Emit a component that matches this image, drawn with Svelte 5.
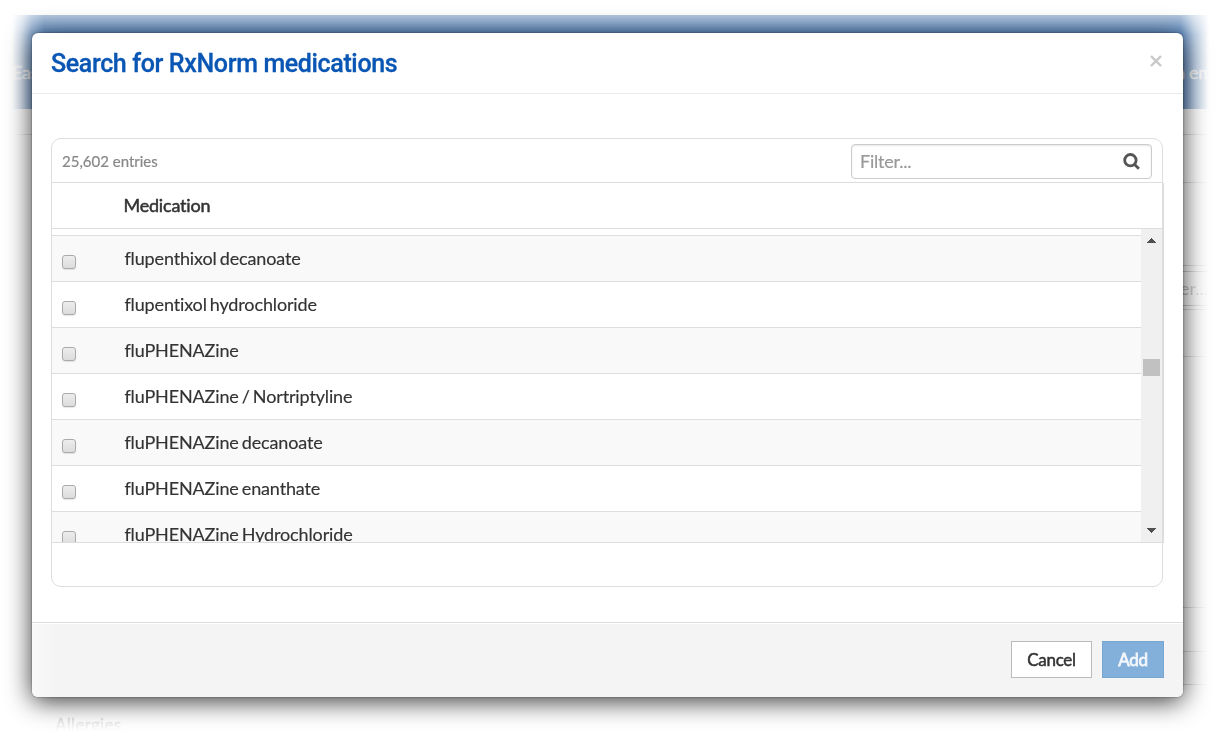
<script>
  let filter = $state('')

  let medications = $state([
    { name: 'flupenthixol decanoate', checked: false },
    { name: 'flupentixol hydrochloride', checked: false },
    { name: 'fluPHENAZine', checked: false },
    { name: 'fluPHENAZine / Nortriptyline', checked: false },
    { name: 'fluPHENAZine decanoate', checked: false },
    { name: 'fluPHENAZine enanthate', checked: false },
    { name: 'fluPHENAZine Hydrochloride', checked: false }
  ])

  const visible = $derived(
    medications.filter(m => m.name.toLowerCase().includes(filter.toLowerCase()))
  )
</script>

<div class="screen">
  <div class="backdrop">
    <div class="site-header">
      <span>Eas</span>
      <span>h em</span>
    </div>
    <div class="page">
      <div class="line full h26"></div>
      <div class="line h48"></div>
      <div class="line h83"></div>
      <div class="field">er...</div>
      <div class="line h4"></div>
      <div class="line h47"></div>
      <div class="line h251"></div>
      <div class="line h44"></div>
      <div class="line h33"></div>
      <div class="section-title">Allergies</div>
    </div>
  </div>

  <div class="modal">
    <header class="modal-header">
      <h3>Search for RxNorm medications</h3>
      <button type="button" class="close" aria-label="Close">
        <svg viewBox="0 0 12 12" width="12" height="12">
          <path d="M1 1L11 11M11 1L1 11" />
        </svg>
      </button>
    </header>

    <div class="modal-body">
      <div class="panel">
        <div class="toolbar">
          <span class="count">25,602 entries</span>
          <label class="filter">
            <input type="text" placeholder="Filter..." bind:value={filter} />
            <svg viewBox="0 0 18 18" width="18" height="18">
              <circle cx="7.4" cy="7.2" r="5.7" />
              <path d="M11.4 11.2L15.9 15.7" />
            </svg>
          </label>
        </div>

        <div class="table">
          <div class="table-head">Medication</div>
          <div class="table-body">
            <div class="rows">
              {#each visible as med (med.name)}
                <label class="row">
                  <input type="checkbox" bind:checked={med.checked} />
                  <span>{med.name}</span>
                </label>
              {/each}
            </div>
            <div class="scrollbar">
              <svg viewBox="0 0 10 5" width="10" height="5" shape-rendering="crispEdges">
                <path d="M0 5L5 0L10 5Z" />
              </svg>
              <div class="thumb"></div>
              <svg class="down" viewBox="0 0 10 5" width="10" height="5" shape-rendering="crispEdges">
                <path d="M0 0L5 5L10 0Z" />
              </svg>
            </div>
          </div>
        </div>
        <div class="panel-foot"></div>
      </div>
    </div>

    <footer class="modal-footer">
      <button type="button" class="btn">Cancel</button>
      <button type="button" class="btn primary">Add</button>
    </footer>
  </div>
</div>

<style>
  :global(body) {
    margin: 0;
    background: #fff;
  }

  .screen {
    position: relative;
    box-sizing: border-box;
    width: 1219px;
    height: 737px;
    padding: 33px 36px 40px 32px;
    overflow: hidden;
    font-family: Lato, sans-serif;
    font-size: 18px;
    color: #333;
  }

  /* page behind the dialog, faded out towards the edges */
  .backdrop {
    position: absolute;
    inset: 0;
    box-sizing: border-box;
    padding-top: 15px;
    -webkit-mask-image: linear-gradient(to right, transparent 12px, rgba(0, 0, 0, 0.25) 22px, rgba(0, 0, 0, 0.7) 32px, #000 44px, #000 1180px, rgba(0, 0, 0, 0.4) 1194px, transparent 1209px);
    mask-image: linear-gradient(to right, transparent 12px, rgba(0, 0, 0, 0.25) 22px, rgba(0, 0, 0, 0.7) 32px, #000 44px, #000 1180px, rgba(0, 0, 0, 0.4) 1194px, transparent 1209px);
  }

  .site-header {
    display: flex;
    justify-content: space-between;
    align-items: center;
    box-sizing: border-box;
    height: 94px;
    padding: 20px 0 0 12px;
    background: linear-gradient(#b5c8df, #5f8fc8 20px);
    color: #f0f0f0;
    letter-spacing: -0.3px;
    line-height: 22px;
    -webkit-text-stroke: 0.3px #f0f0f0;
  }

  .site-header span:last-child {
    width: 44px;
    overflow: hidden;
    white-space: nowrap;
  }

  .line {
    box-sizing: border-box;
    margin-left: 1170px;
    border-bottom: 1px solid #ccc;
  }

  .line.full { margin-left: 0; }
  .h26 { height: 26px; }
  .h48 { height: 48px; }
  .h83 { height: 83px; }
  .h4 { height: 4px; }
  .h47 { height: 47px; }
  .h251 { height: 251px; }
  .h44 { height: 44px; }
  .h33 { height: 33px; }

  .field {
    box-sizing: border-box;
    height: 35px;
    margin: 5px 0 0 1170px;
    padding-left: 9px;
    border: 1px solid #bbb;
    color: #aaa;
    line-height: 32px;
  }

  .section-title {
    padding: 28px 0 0 55px;
    color: #ddd;
    font-size: 17px;
    letter-spacing: 0.3px;
    line-height: 24px;
    -webkit-text-stroke: 0.4px #ddd;
    -webkit-mask-image: linear-gradient(#000 32px, transparent 46px);
    mask-image: linear-gradient(#000 32px, transparent 46px);
  }

  .modal {
    position: relative;
    display: flex;
    flex-direction: column;
    height: 664px;
    border-radius: 6px;
    background: #fff;
    box-shadow: 0 0 2px rgba(0, 0, 0, 0.5), 0 4px 26px rgba(0, 0, 0, 0.8);
  }

  .modal-header {
    display: flex;
    justify-content: space-between;
    align-items: center;
    box-sizing: border-box;
    height: 61px;
    padding: 0 21px 0 19px;
    border-bottom: 1px solid #ebebeb;
  }

  h3 {
    margin: 0;
    padding-top: 1px;
    color: #0a56b4;
    font-family: Roboto, sans-serif;
    font-size: 25px;
    font-weight: 500;
    letter-spacing: -0.36px;
    line-height: 30px;
    -webkit-text-stroke: 0.3px #0a56b4;
  }

  .close {
    display: flex;
    margin-top: -5px;
    padding: 0;
    border: 0;
    background: none;
  }

  .close path {
    fill: none;
    stroke: #c8c8c8;
    stroke-width: 2.4;
  }

  .modal-body {
    box-sizing: border-box;
    height: 528px;
    padding: 44px 20px 0 19px;
  }

  .panel {
    box-sizing: border-box;
    height: 449px;
    border: 1px solid #ddd;
    border-radius: 10px;
  }

  .toolbar {
    display: flex;
    justify-content: space-between;
    align-items: center;
    height: 43px;
    padding: 0 10px;
    border-bottom: 1px solid #ddd;
  }

  .count {
    color: #888;
    font-size: 15px;
    -webkit-text-stroke: 0.2px #888;
  }

  .filter {
    display: flex;
    align-items: center;
    box-sizing: border-box;
    width: 301px;
    height: 35px;
    margin-top: 2px;
    padding: 0 10px 0 8px;
    border: 1px solid #ccc;
    border-radius: 4px;
    box-shadow: inset 0 1px 2px rgba(0, 0, 0, 0.1);
  }

  .filter input {
    flex: 1;
    min-width: 0;
    padding: 0 0 2px;
    border: 0;
    outline: 0;
    background: none;
    color: #333;
    font: inherit;
    letter-spacing: -0.2px;
  }

  .filter input::placeholder {
    color: #999;
    -webkit-text-stroke: 0.2px #999;
  }

  .filter svg {
    fill: none;
    stroke: #555;
    stroke-width: 2.8;
  }

  /* the table is one pixel wider than its panel */
  .table {
    box-sizing: border-box;
    width: 1112px;
    border-right: 1px solid #ddd;
  }

  .table-head {
    box-sizing: border-box;
    height: 46px;
    margin-right: 1px;
    padding-left: 71.4px;
    border-bottom: 1px solid #ddd;
    font-weight: 400;
    letter-spacing: -0.18px;
    line-height: 45px;
    -webkit-text-stroke: 0.5px #333;
  }

  .table-body {
    display: flex;
    height: 313px;
    margin-right: 1px;
    border-bottom: 1px solid #ddd;
    overflow: hidden;
  }

  .rows {
    flex: 1;
    padding-top: 6px;
  }

  .row {
    display: flex;
    box-sizing: border-box;
    height: 46px;
    padding-left: 10px;
    border-top: 1px solid #ddd;
    letter-spacing: -0.14px;
    word-spacing: -1.4px;
    line-height: 44px;
    -webkit-text-stroke: 0.15px #333;
  }

  .row:nth-child(odd) {
    background: #f9f9f9;
  }

  .row input {
    appearance: none;
    box-sizing: border-box;
    width: 14px;
    height: 14px;
    margin: 19px 48.4px 0 0;
    border: 1px solid #aaa;
    border-radius: 3px;
    background: linear-gradient(#ededed, #dcdcdc);
    box-shadow: 0 1px 1px rgba(0, 0, 0, 0.1);
  }

  .row input:checked {
    background: #888;
  }

  .scrollbar {
    display: flex;
    flex-direction: column;
    align-items: center;
    box-sizing: border-box;
    width: 21px;
    padding: 9px 1px 9px 0;
    background: #f0f0f0;
  }

  .scrollbar svg {
    fill: #505050;
  }

  .thumb {
    width: 17px;
    height: 17px;
    margin-top: 116px;
    background: #c1c1c1;
  }

  .down {
    margin-top: auto;
  }

  .modal-footer {
    display: flex;
    justify-content: flex-end;
    align-items: flex-start;
    gap: 10px;
    box-sizing: border-box;
    height: 75px;
    padding: 18px 19px 0;
    border-top: 1px solid #ddd;
    border-radius: 0 0 6px 6px;
    background: linear-gradient(to right, #f9f9f9, #f4f4f4 24px);
    box-shadow: inset 0 1px 0 #fff;
  }

  .btn {
    box-sizing: border-box;
    width: 81px;
    height: 37px;
    padding: 0;
    border: 1px solid #bbb;
    background: #fff;
    color: #333;
    font-family: inherit;
    font-size: 17px;
    letter-spacing: -0.3px;
    -webkit-text-stroke: 0.5px currentColor;
  }

  .btn.primary {
    width: 62px;
    border-color: #76a7d2;
    background: #82b0da;
    color: #f3f7fb;
    -webkit-text-stroke-width: 0.8px;
  }
</style>
